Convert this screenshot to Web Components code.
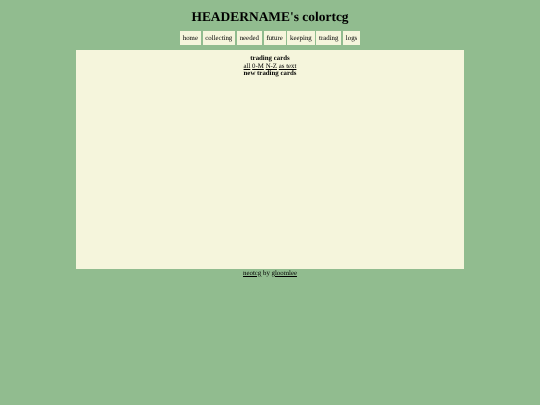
<!DOCTYPE html>
<html><head><meta charset="utf-8"><style>
html,body{margin:0;padding:0;background:#91bc8f;}
body{font-family:"Liberation Serif",serif;color:#000;text-rendering:geometricPrecision;}
</style></head><body>
<template id="t-page"><style>
:host{display:flex;flex-direction:column;align-items:center;width:540px;height:405px;box-sizing:border-box;padding-top:9px;filter:blur(.2px)}
</style><slot></slot></template>
<template id="t-title"><style>
:host{display:block;font:bold 13.45px/16px "Liberation Serif",serif;text-align:center;margin-bottom:5.5px}
</style><slot></slot></template>
<template id="t-nav"><style>
:host{display:flex;gap:1.75px;margin-bottom:5.5px}
</style><slot></slot></template>
<template id="t-btn"><style>
:host{display:block;box-sizing:border-box;background:#f5f5dc;padding:1.3px 2.8px 0;height:14px;font:6.85px/14px "Liberation Serif",serif;color:#000}
</style><slot></slot></template>
<template id="t-panel"><style>
:host{display:block;box-sizing:border-box;width:388px;height:219px;background:#f5f5dc;padding-top:4.8px;text-align:center;font:6.85px/7.6px "Liberation Serif",serif}
</style><slot></slot></template>
<template id="t-foot"><style>
:host{display:block;padding-top:.8px;font:6.85px/8px "Liberation Serif",serif;text-align:center}
::slotted(a){color:#000;text-decoration:underline}
</style><slot></slot></template>
<template id="t-line"><style>
:host{display:block}
:host([bold]){font-weight:bold}
:host([links]){padding-top:.5px;margin-bottom:-.5px}
::slotted(a){color:#000;text-decoration:underline}
</style><slot></slot></template>
<tcg-page>
<tcg-title>HEADERNAME's colortcg</tcg-title>
<tcg-nav>
<tcg-btn>home</tcg-btn><tcg-btn>collecting</tcg-btn><tcg-btn>needed</tcg-btn><tcg-btn>future</tcg-btn><tcg-btn>keeping</tcg-btn><tcg-btn>trading</tcg-btn><tcg-btn>logs</tcg-btn>
</tcg-nav>
<tcg-panel>
<tcg-line bold>trading cards</tcg-line>
<tcg-line links><a href="#">all</a> <a href="#">0-M</a> <a href="#">N-Z</a> <a href="#">as text</a></tcg-line>
<tcg-line bold>new trading cards</tcg-line>
</tcg-panel>
<tcg-foot><a href="#">neotcg</a> by <a href="#">gloomlee</a></tcg-foot>
</tcg-page>
<script>
for (const [tag,id] of [['tcg-page','t-page'],['tcg-title','t-title'],['tcg-nav','t-nav'],['tcg-btn','t-btn'],['tcg-panel','t-panel'],['tcg-foot','t-foot'],['tcg-line','t-line']]) {
  customElements.define(tag, class extends HTMLElement {
    constructor(){super();this.attachShadow({mode:'open'}).appendChild(document.getElementById(id).content.cloneNode(true));}
  });
}
</script>
</body></html>
